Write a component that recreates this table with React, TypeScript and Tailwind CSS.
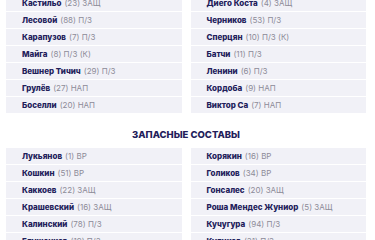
import React from "react";

type P = { n: string; num: string; pos: string };

const topL: P[] = [
  { n: "Кастильо", num: "(23)", pos: "ЗАЩ" },
  { n: "Лесовой", num: "(88)", pos: "П/З" },
  { n: "Карапузов", num: "(7)", pos: "П/З" },
  { n: "Майга", num: "(8)", pos: "П/З (К)" },
  { n: "Вешнер Тичич", num: "(29)", pos: "П/З" },
  { n: "Грулёв", num: "(27)", pos: "НАП" },
  { n: "Боселли", num: "(20)", pos: "НАП" },
];
const topR: P[] = [
  { n: "Диего Коста", num: "(4)", pos: "ЗАЩ" },
  { n: "Черников", num: "(53)", pos: "П/З" },
  { n: "Сперцян", num: "(10)", pos: "П/З (К)" },
  { n: "Батчи", num: "(11)", pos: "П/З" },
  { n: "Ленини", num: "(6)", pos: "П/З" },
  { n: "Кордоба", num: "(9)", pos: "НАП" },
  { n: "Виктор Са", num: "(7)", pos: "НАП" },
];
const botL: P[] = [
  { n: "Лукьянов", num: "(1)", pos: "ВР" },
  { n: "Кошкин", num: "(51)", pos: "ВР" },
  { n: "Каккоев", num: "(22)", pos: "ЗАЩ" },
  { n: "Крашевский", num: "(16)", pos: "ЗАЩ" },
  { n: "Калинский", num: "(78)", pos: "П/З" },
  { n: "Глушенков", num: "(19)", pos: "П/З" },
];
const botR: P[] = [
  { n: "Корякин", num: "(16)", pos: "ВР" },
  { n: "Голиков", num: "(34)", pos: "ВР" },
  { n: "Гонсалес", num: "(20)", pos: "ЗАЩ" },
  { n: "Роша Мендес Жуниор", num: "(5)", pos: "ЗАЩ" },
  { n: "Кучугура", num: "(94)", pos: "П/З" },
  { n: "Куликов", num: "(31)", pos: "П/З" },
];

function Col({ items }: { items: P[] }) {
  return (
    <div className="flex flex-col gap-px">
      {items.map((p) => (
        <div key={p.n} className="h-4 flex items-center bg-[#f1f1f7] pl-4 text-[8px] whitespace-nowrap leading-none">
          <span className="font-extrabold text-[#22205a]">{p.n}</span>
          <span className="ml-[3px] text-[#8d8b98]">{p.num} {p.pos}</span>
        </div>
      ))}
    </div>
  );
}

export default function App() {
  return (
    <div className="w-[375px] h-[240px] overflow-hidden bg-white" style={{ fontFamily: "Inter, 'Noto Sans', sans-serif" }}>
      <div className="mt-[-5px] pl-[6px] w-[366px]">
        <div className="grid grid-cols-2 gap-[9px]">
          <Col items={topL} />
          <Col items={topR} />
        </div>
        <div className="h-[35px] pt-[8px] flex items-center justify-center text-[9.5px] font-extrabold text-[#22205a] leading-none">
          ЗАПАСНЫЕ СОСТАВЫ
        </div>
        <div className="grid grid-cols-2 gap-[9px]">
          <Col items={botL} />
          <Col items={botR} />
        </div>
      </div>
    </div>
  );
}
